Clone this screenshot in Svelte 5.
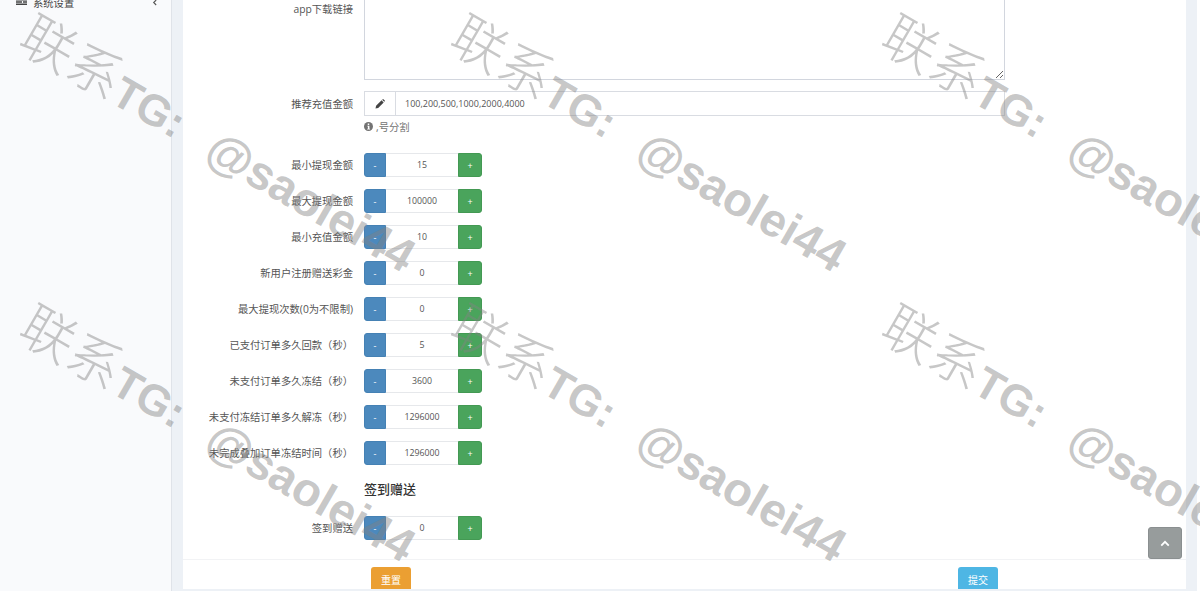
<script>
  const rows = [
    { label: '最小提现金额', value: '15' },
    { label: '最大提现金额', value: '100000' },
    { label: '最小充值金额', value: '10' },
    { label: '新用户注册赠送彩金', value: '0' },
    { label: '最大提现次数(0为不限制)', value: '0' },
    { label: '已支付订单多久回款（秒）', value: '5' },
    { label: '未支付订单多久冻结（秒）', value: '3600' },
    { label: '未支付冻结订单多久解冻（秒）', value: '1296000' },
    { label: '未完成叠加订单冻结时间（秒）', value: '1296000' }
  ]

  // watermark tiles, repeated every 431px across and 290px down
  const marks = []
  for (let r = 0; r < 2; r++) {
    for (let c = 0; c < 3; c++) {
      marks.push({ x: 25 + c * 431, y: 3 + r * 290 })
    }
  }
</script>

<div class="page">
  <aside class="sidebar">
    <div class="menu-item">
      <svg class="menu-icon" viewBox="0 0 11 6" width="11" height="6"><path d="M0 0h11v1.5H0zM0 2.2h6v1.5H0zM7 2.2h4v1.5H7zM0 4.4h11V6H0z" fill="#444" /></svg>
      <span class="menu-text">系统设置</span>
      <svg class="chevron" viewBox="0 0 6 8" width="5" height="7"><path d="M5 1 2 4l3 3" fill="none" stroke="#555" stroke-width="1.3" /></svg>
    </div>
  </aside>

  <main class="content">
    <section class="card">
      <div class="form">
        <div class="row area-row">
          <label class="label" for="app-url">app下载链接</label>
          <div class="area-wrap">
            <textarea id="app-url"></textarea>
          </div>
        </div>

        <div class="row amount-row">
          <label class="label" for="amounts">推荐充值金额</label>
          <div class="amount-group">
            <span class="addon">
              <svg viewBox="0 0 12 12" width="10" height="10"><path d="M0.6 11.4 1.3 8.2 7.9 1.6 10.4 4.1 3.8 10.7zM8.6 0.9 9.3 0.3Q9.8 0 10.2 0.3L11.7 1.8Q12 2.2 11.7 2.7L11.1 3.4z" fill="#444" /></svg>
            </span>
            <input id="amounts" value="100,200,500,1000,2000,4000" />
          </div>
        </div>
        <p class="help">
          <svg viewBox="0 0 12 12" width="9" height="9"><circle cx="6" cy="6" r="6" fill="#737373" /><rect x="5" y="2" width="2" height="2" fill="#fff" /><path d="M4.4 5h2.8v4h.9v1H4.2V9h1V6h-.8z" fill="#fff" /></svg>
          ,号分割
        </p>

        {#each rows as row}
          <div class="row num-row">
            <span class="label">{row.label}</span>
            <div class="stepper">
              <button class="minus">-</button>
              <input value={row.value} />
              <button class="plus">+</button>
            </div>
          </div>
        {/each}

        <h4 class="section-title">签到赠送</h4>

        <div class="row num-row">
          <span class="label">签到赠送</span>
          <div class="stepper">
            <button class="minus">-</button>
            <input value="0" />
            <button class="plus">+</button>
          </div>
        </div>
      </div>

      <div class="footer">
        <div class="footer-col"><button class="reset">重置</button></div>
        <div class="footer-col"><button class="submit">提交</button></div>
      </div>
    </section>
  </main>

  <button class="to-top" aria-label="top">
    <svg viewBox="0 0 12 8" width="10" height="7"><path d="M1.5 6.5 6 2l4.500 4.500" fill="none" stroke="#fff" stroke-width="2.200" /></svg>
  </button>

  <div class="watermarks" aria-hidden="true">
    {#each marks as m}
      <div class="mark" style="left: {m.x}px; top: {m.y}px">
        <span class="wm-cn">联系</span><span class="wm-tg">TG:</span>
      </div>
      <div class="mark at" style="left: {m.x + 186}px; top: {m.y + 117}px">@saolei44</div>
    {/each}
  </div>
</div>

<style>
  :global(body) {
    margin: 0;
    background: #fff;
    font-family: "Open Sans", "Noto Sans CJK SC", sans-serif;
  }

  .page {
    position: relative;
    display: flex;
    width: 1200px;
    height: 591px;
    overflow: hidden;
    color: #555;
    font-size: 10.3px;
  }

  .sidebar {
    flex: none;
    box-sizing: border-box;
    width: 172px;
    background: #f9fafc;
    border-right: 1px solid #dfe3e9;
  }

  .menu-item {
    display: flex;
    align-items: center;
    height: 8px;
    margin-top: -2px;
    padding: 0 14px 0 16px;
    color: #444;
  }

  .menu-text {
    flex: 1;
    margin-left: 6px;
  }

  .menu-icon,
  .chevron {
    flex: none;
  }

  .content {
    flex: 1;
    margin-right: 3px;
    padding: 0 11px 2px 11px;
    min-width: 0;
    background: #edf1f6;
  }

  .card {
    display: flex;
    flex-direction: column;
    height: 589px;
    overflow: hidden;
    background: #fff;
  }

  .form {
    flex: 1;
    min-height: 0;
  }

  .row {
    display: flex;
  }

  .label {
    flex: none;
    box-sizing: border-box;
    width: 170px;
    text-align: right;
    white-space: nowrap;
  }

  .area-row .label {
    margin-top: 1px;
  }

  .area-wrap {
    margin-left: 11px;
    width: 641px;
    height: 80px;
  }

  textarea {
    box-sizing: border-box;
    display: block;
    width: 100%;
    height: 100%;
    margin: 0;
    border: 1px solid #d2d6de;
    border-top: none;
    background: #fff;
    outline: none;
  }

  .amount-row {
    align-items: center;
    margin-top: 11px;
  }

  .amount-group {
    display: flex;
    width: 641px;
    height: 25px;
    margin-left: 11px;
    border: 1px solid #d9dce2;
    box-sizing: border-box;
  }

  .addon {
    flex: none;
    display: flex;
    align-items: center;
    justify-content: center;
    width: 30px;
    border-right: 1px solid #d9dce2;
  }

  .amount-group input {
    flex: 1;
    min-width: 0;
    border: none;
    outline: none;
    padding: 0 9px;
    font: inherit;
    font-size: 9px;
    color: #555;
  }

  .help {
    display: flex;
    align-items: center;
    gap: 3px;
    height: 14px;
    margin: 3px 0 20px 181px;
    color: #737373;
  }

  .num-row {
    align-items: center;
    height: 24px;
    margin-bottom: 12px;
  }

  .num-row .label {
    padding-bottom: 2px;
  }

  .stepper {
    display: flex;
    width: 118px;
    height: 24px;
    margin-left: 11px;
  }

  .stepper button {
    flex: none;
    height: 24px;
    padding: 0;
    color: #fff;
    font: inherit;
    font-size: 9px;
    border-width: 1px;
    border-style: solid;
  }

  .minus {
    width: 22px;
    background: #4c89bd;
    border-color: #4581b4;
    border-radius: 3px 0 0 3px;
  }

  .plus {
    width: 24px;
    background: #4aa45c;
    border-color: #439953;
    border-radius: 0 3px 3px 0;
  }

  .stepper input {
    box-sizing: border-box;
    width: 72px;
    height: 24px;
    border: none;
    border-top: 1px solid #e6e8eb;
    border-bottom: 1px solid #e6e8eb;
    outline: none;
    padding: 0;
    text-align: center;
    font: inherit;
    font-size: 8.8px;
    color: #555;
  }

  .section-title {
    height: 17px;
    margin: 16px 0 18px 181px;
    font-size: 13px;
    line-height: 17px;
    font-weight: 500;
    color: #333;
  }

  .footer {
    flex: none;
    display: flex;
    height: 30px;
    padding: 7px 0 0 188px;
    box-sizing: border-box;
    border-top: 1px solid #f2f3f5;
    overflow: hidden;
  }

  .footer-col {
    flex: none;
    width: 587px;
  }

  .footer button {
    width: 40px;
    height: 24px;
    padding: 0;
    border: none;
    border-radius: 3px;
    color: #fff;
    font: inherit;
    font-size: 10px;
  }

  .reset {
    background: #eb9f32;
  }

  .submit {
    background: #4eb6e4;
  }

  .to-top {
    position: absolute;
    left: 1148px;
    top: 527px;
    display: flex;
    align-items: center;
    justify-content: center;
    width: 34px;
    height: 32px;
    padding: 0;
    border: 1px solid #8a8f90;
    border-radius: 3px;
    background: #979c9c;
  }

  .watermarks {
    position: absolute;
    inset: 0;
    pointer-events: none;
  }

  .mark {
    position: absolute;
    white-space: nowrap;
    transform: rotate(30deg);
    transform-origin: 0 50%;
    color: rgba(130, 130, 130, 0.45);
    font-family: "Liberation Sans", sans-serif;
    font-size: 47px;
    line-height: 47px;
  }

  .wm-cn {
    font-family: "Noto Sans CJK SC", sans-serif;
    font-size: 54px;
    font-weight: 300;
  }

  .wm-tg {
    font-size: 44px;
  }

  .wm-tg,
  .at {
    font-weight: 700;
  }
</style>
